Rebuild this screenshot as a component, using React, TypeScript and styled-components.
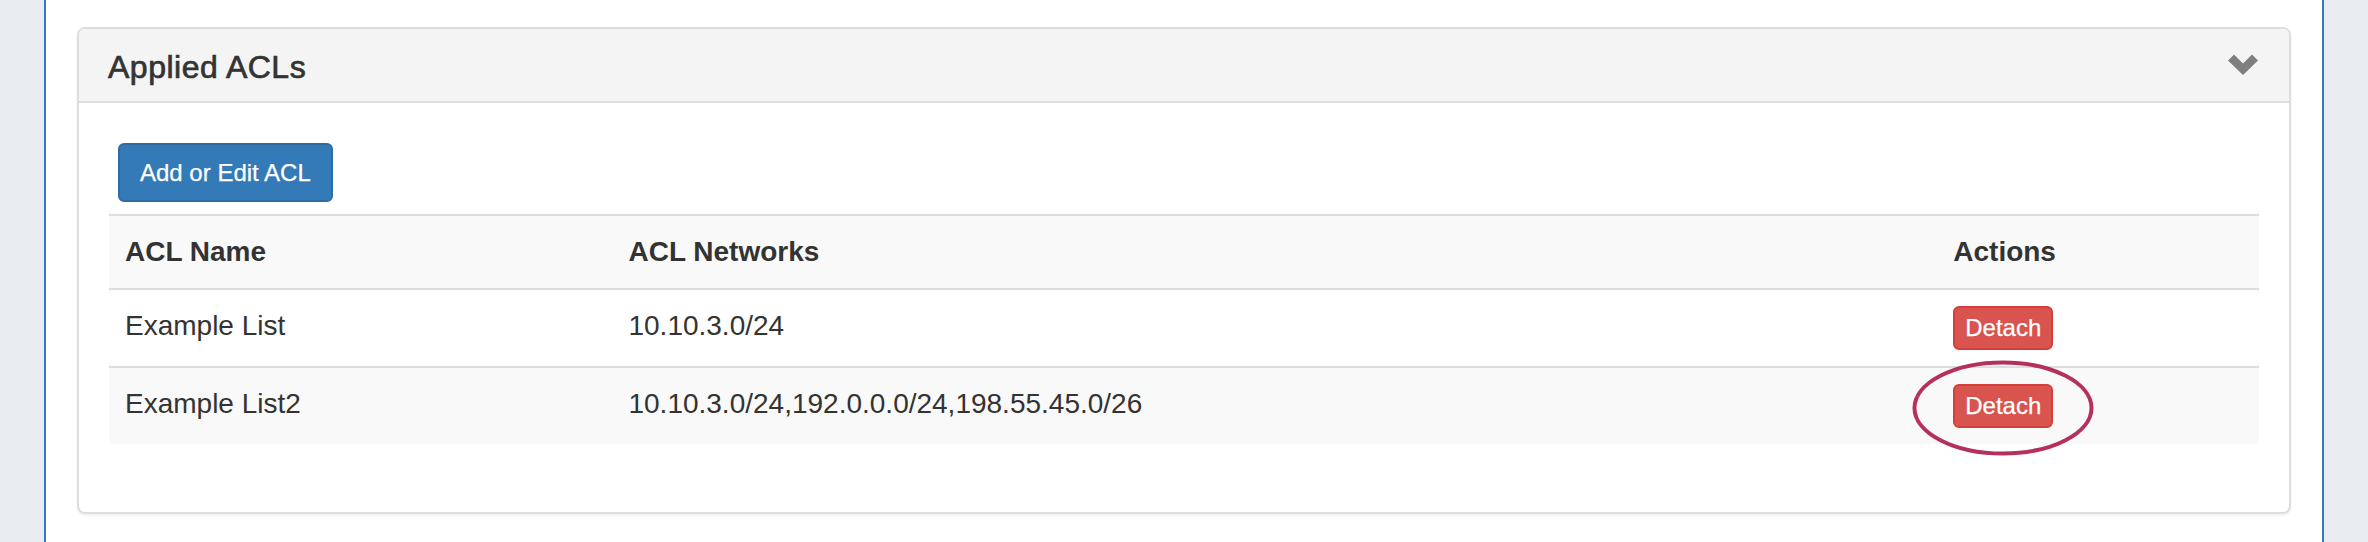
import React from "react";
import styled, { createGlobalStyle } from "styled-components";

const GlobalStyle = createGlobalStyle`
  html, body {
    margin: 0;
    padding: 0;
    background: #e9edf1;
  }
  body {
    font-family: "Liberation Sans", Arial, Helvetica, sans-serif;
    color: #333333;
  }
  * { box-sizing: border-box; }
`;

const Page = styled.div`
  min-height: 100vh;
  padding: 0 44px;
`;

const ContentStrip = styled.div`
  min-height: 100vh;
  background: #ffffff;
  border-left: 2px solid #3579b9;
  border-right: 2px solid #3579b9;
  padding: 27px 31px 0;
`;

const Panel = styled.section`
  background: #ffffff;
  border: 2px solid #dddddd;
  border-radius: 8px;
  box-shadow: 0 2px 2px rgba(0, 0, 0, 0.05);
`;

const PanelHeading = styled.header`
  display: flex;
  align-items: center;
  justify-content: space-between;
  background: #f4f4f4;
  border-bottom: 2px solid #dddddd;
  border-radius: 6px 6px 0 0;
  padding: 22px 31px 18px 29px;
`;

const PanelTitle = styled.h3`
  margin: 0;
  font-size: 32px;
  line-height: 32px;
  font-weight: 400;
  color: #333333;
  -webkit-text-stroke: 0.7px #333333;
  letter-spacing: 0.5px;
`;

const Chevron = styled.svg`
  display: block;
  width: 30px;
  height: 21px;
  margin-top: -6px;
`;

const PanelBody = styled.div`
  padding: 30px 30px 30px;
`;

const Toolbar = styled.div`
  padding: 10px 0 12px 9px;
`;

const Button = styled.button<{ $variant: "primary" | "danger"; $size: "sm" | "xs" }>`
  display: inline-block;
  vertical-align: middle;
  font-family: "Liberation Sans", Arial, Helvetica, sans-serif;
  font-size: 24px;
  font-weight: 400;
  color: #ffffff;
  -webkit-text-stroke: 0.25px #ffffff;
  cursor: pointer;
  border-style: solid;
  border-width: 2px;
  background: ${(p) => (p.$variant === "primary" ? "#337ab7" : "#d9534f")};
  border-color: ${(p) => (p.$variant === "primary" ? "#2e6da4" : "#d43f3a")};
  padding: ${(p) => (p.$size === "sm" ? "10px 20px" : "2px 10px")};
  line-height: ${(p) => (p.$size === "sm" ? "35px" : "36px")};
  border-radius: 6px;
`;

const Table = styled.table`
  width: 100%;
  border-collapse: collapse;
  margin-bottom: 38px;
  font-size: 28px;
  line-height: 40px;
`;

const HeadCell = styled.th<{ $width: number }>`
  width: ${(p) => p.$width}px;
  text-align: left;
  font-weight: 700;
  padding: 16px;
  vertical-align: bottom;
  background: #f9f9f9;
  border-top: 2px solid #dddddd;
  border-bottom: 2px solid #dddddd;
`;

const Row = styled.tr<{ $striped: boolean }>`
  background: ${(p) => (p.$striped ? "#f9f9f9" : "#ffffff")};
`;

const Cell = styled.td`
  padding: 16px;
  vertical-align: top;
  border-top: 2px solid #dddddd;
`;

const Annotated = styled.span`
  position: relative;
  display: inline-block;
  vertical-align: middle;
`;

const Oval = styled.svg`
  position: absolute;
  left: -41px;
  top: -24px;
  width: 182px;
  height: 96px;
  pointer-events: none;
  overflow: visible;
`;

type AclRow = { name: string; networks: string; highlighted?: boolean };

const rows: AclRow[] = [
  { name: "Example List", networks: "10.10.3.0/24" },
  {
    name: "Example List2",
    networks: "10.10.3.0/24,192.0.0.0/24,198.55.45.0/26",
    highlighted: true,
  },
];

export default function App() {
  return (
    <>
      <GlobalStyle />
      <Page>
        <ContentStrip>
          <Panel>
            <PanelHeading>
              <PanelTitle>Applied ACLs</PanelTitle>
              <Chevron viewBox="0 0 30 21" aria-hidden="true">
                <polygon
                  points="0,6.5 6,0.5 15,9.5 24,0.5 30,6.5 15,21"
                  fill="#7f7f7f"
                />
              </Chevron>
            </PanelHeading>
            <PanelBody>
              <Toolbar>
                <Button $variant="primary" $size="sm">
                  Add or Edit ACL
                </Button>
              </Toolbar>
              <Table>
                <thead>
                  <tr>
                    <HeadCell $width={504}>ACL Name</HeadCell>
                    <HeadCell $width={1326}>ACL Networks</HeadCell>
                    <HeadCell $width={322}>Actions</HeadCell>
                  </tr>
                </thead>
                <tbody>
                  {rows.map((r, i) => (
                    <Row key={r.name} $striped={i % 2 === 1}>
                      <Cell>{r.name}</Cell>
                      <Cell>{r.networks}</Cell>
                      <Cell>
                        {r.highlighted ? (
                          <Annotated>
                            <Button $variant="danger" $size="xs">
                              Detach
                            </Button>
                            <Oval viewBox="0 0 182 96" aria-hidden="true">
                              <ellipse
                                cx="91"
                                cy="48"
                                rx="88.5"
                                ry="45.5"
                                fill="none"
                                stroke="#b5305f"
                                strokeWidth="4"
                              />
                            </Oval>
                          </Annotated>
                        ) : (
                          <Button $variant="danger" $size="xs">
                            Detach
                          </Button>
                        )}
                      </Cell>
                    </Row>
                  ))}
                </tbody>
              </Table>
            </PanelBody>
          </Panel>
        </ContentStrip>
      </Page>
    </>
  );
}
